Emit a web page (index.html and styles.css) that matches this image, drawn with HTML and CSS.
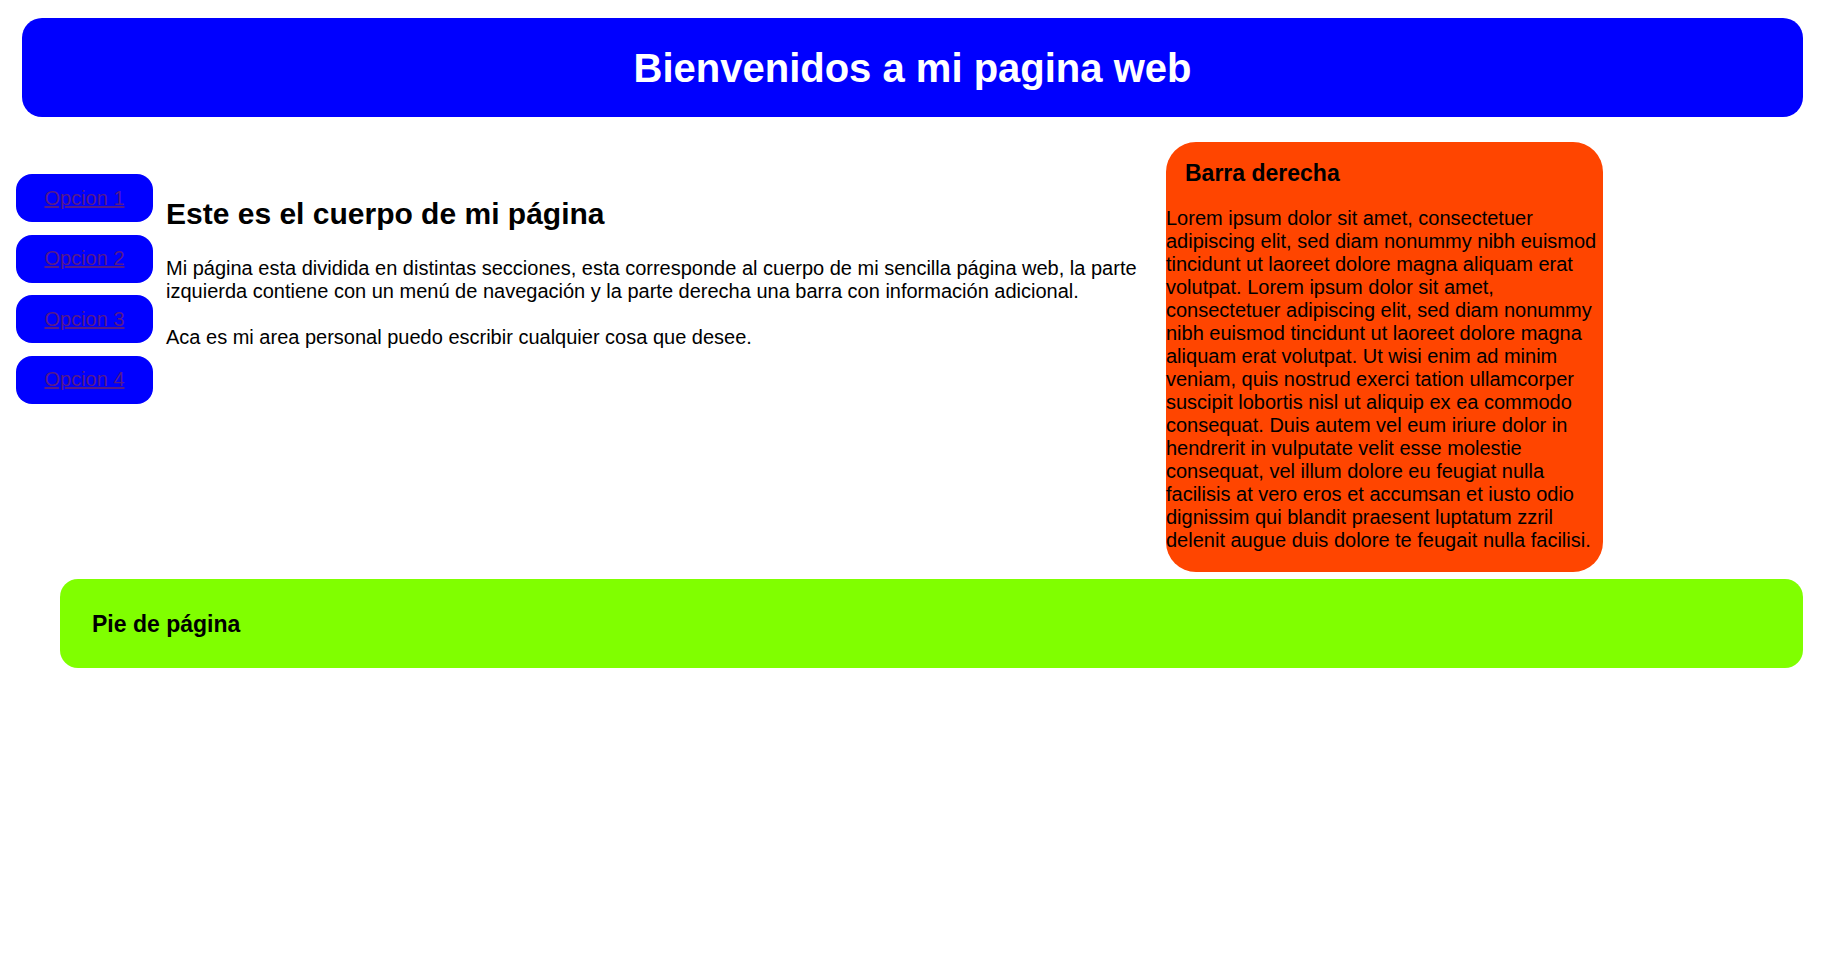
FILE: index.html
```html
<!DOCTYPE html>
<html lang="es">
<head>
<meta charset="utf-8">
<title>Mi pagina web</title>
<link rel="stylesheet" href="styles.css">
</head>
<body>
<header class="header">
  <h1 class="header-title">Bienvenidos a mi pagina web</h1>
</header>
<div class="middle">
  <nav class="nav">
    <div class="nav-item"><a class="nav-link" href="#">Opcion 1</a></div>
    <div class="nav-item"><a class="nav-link" href="#">Opcion 2</a></div>
    <div class="nav-item"><a class="nav-link" href="#">Opcion 3</a></div>
    <div class="nav-item"><a class="nav-link" href="#">Opcion 4</a></div>
  </nav>
  <main class="main">
    <h2 class="main-title">Este es el cuerpo de mi página</h2>
    <p class="main-text">Mi página esta dividida en distintas secciones, esta corresponde al cuerpo de mi sencilla página web, la parte izquierda contiene con un menú de navegación y la parte derecha una barra con información adicional.</p>
    <p class="main-text">Aca es mi area personal puedo escribir cualquier cosa que desee.</p>
  </main>
  <aside class="sidebar">
    <h3 class="sidebar-title">Barra derecha</h3>
    <p class="sidebar-text">Lorem ipsum dolor sit amet, consectetuer adipiscing elit, sed diam nonummy nibh euismod tincidunt ut laoreet dolore magna aliquam erat volutpat. Lorem ipsum dolor sit amet, consectetuer adipiscing elit, sed diam nonummy nibh euismod tincidunt ut laoreet dolore magna aliquam erat volutpat. Ut wisi enim ad minim veniam, quis nostrud exerci tation ullamcorper suscipit lobortis nisl ut aliquip ex ea commodo consequat. Duis autem vel eum iriure dolor in hendrerit in vulputate velit esse molestie consequat, vel illum dolore eu feugiat nulla facilisis at vero eros et accumsan et iusto odio dignissim qui blandit praesent luptatum zzril delenit augue duis dolore te feugait nulla facilisi.</p>
  </aside>
</div>
<footer class="footer">
  <h3 class="footer-title">Pie de página</h3>
</footer>
</body>
</html>
```
FILE: styles.css
```css
html, body {
  margin: 0;
  padding: 0;
  background: #ffffff;
}

body {
  font-family: "Liberation Sans", Arial, sans-serif;
  font-size: 20px;
  color: #000000;
}

.header {
  margin: 18px 19px 0 22px;
  height: 99px;
  background: #0000ff;
  border-radius: 20px;
  display: flex;
  align-items: center;
  justify-content: center;
}

.header-title {
  margin: 0;
  color: #ffffff;
  font-size: 40px;
  font-weight: bold;
  line-height: 46px;
}

.middle {
  display: flex;
  align-items: flex-start;
  margin-top: 25px;
}

.nav {
  flex: 0 0 137px;
  margin-left: 16px;
  margin-top: 32px;
  display: flex;
  flex-direction: column;
  gap: 12.67px;
}

.nav-item {
  height: 48px;
  background: #0000ff;
  border-radius: 16px;
  display: flex;
  align-items: center;
  justify-content: center;
}

.nav-link {
  color: #551a8b;
  text-decoration: underline;
  font-size: 20px;
}

.main {
  flex: 0 0 984px;
  margin-left: 13px;
  padding-top: 55px;
}

.main-title {
  margin: 0 0 25px;
  font-size: 30px;
  font-weight: bold;
  line-height: 34.5px;
}

.main-text {
  margin: 0 0 23px;
  line-height: 23px;
}

.sidebar {
  flex: 0 0 437px;
  margin-left: 16px;
  background: #ff4500;
  border-radius: 30px;
  padding: 18px 0 20px;
}

.sidebar-title {
  margin: 0 0 21px 19px;
  font-size: 23px;
  font-weight: bold;
  line-height: 26px;
}

.sidebar-text {
  margin: 0;
  line-height: 23px;
}

.footer {
  margin: 7px 19px 0 60px;
  height: 89px;
  background: #80ff00;
  border-radius: 18px;
  display: flex;
  align-items: center;
  padding-left: 32px;
}

.footer-title {
  margin: 0;
  font-size: 23px;
  font-weight: bold;
  line-height: 26px;
}
```
